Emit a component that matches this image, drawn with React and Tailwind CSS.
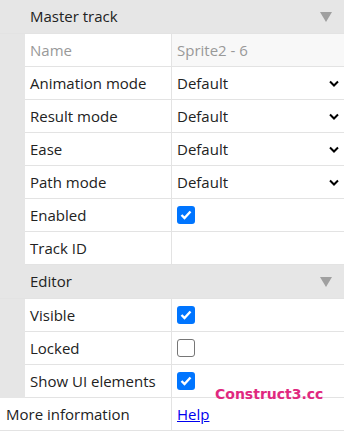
const font = { fontFamily: '"Segoe UI", "Open Sans", "Noto Sans", sans-serif' };

function Chevron() {
  return (
    <svg width="10" height="7" viewBox="0 0 10 7" className="mr-[5px]">
      <path d="M1 1.5 L5 5.5 L9 1.5" fill="none" stroke="#000" strokeWidth="2" />
    </svg>
  );
}

function Check({ on }) {
  if (!on) {
    return <div className="h-[18px] w-[18px] rounded-[3px] border border-[#767676] bg-white" />;
  }
  return (
    <div className="flex h-[18px] w-[18px] items-center justify-center rounded-[3px] bg-[#0075ff]">
      <svg width="12" height="10" viewBox="0 0 12 10">
        <path d="M1.5 5 L4.5 8 L10.5 1.5" fill="none" stroke="#fff" strokeWidth="2.4" />
      </svg>
    </div>
  );
}

function Header({ title }) {
  return (
    <div className="flex h-[33px] items-center justify-between bg-[#e6e6e6] pl-[30px] pr-[12px] text-[15px] text-[#222]">
      <span>{title}</span>
      <svg width="12" height="10" viewBox="0 0 12 10">
        <path d="M0 0 L12 0 L6 10 Z" fill="#a0a0a0" />
      </svg>
    </div>
  );
}

function Row({ label, children, muted, indent = true, valueBg = "bg-white" }) {
  return (
    <div className={`flex h-[33px] ${indent ? "ml-[25px]" : ""} border-b border-[#e3e3e3] bg-white text-[15px]`}>
      <div
        className={`flex ${indent ? "w-[147px] pl-[5px]" : "w-[172px] pl-[6px]"} items-center border-r border-[#e3e3e3] ${muted ? "text-[#999]" : "text-[#222]"}`}
      >
        {label}
      </div>
      <div className={`flex flex-1 items-center justify-between pl-[5px] ${valueBg}`}>{children}</div>
    </div>
  );
}

function Select() {
  return (
    <>
      <span className="text-[#222]">Default</span>
      <Chevron />
    </>
  );
}

export default function App() {
  return (
    <div className="relative h-[431px] w-[344px] overflow-hidden bg-[#e6e6e6]" style={font}>
      <Header title="Master track" />
      <div className="border-t border-[#e3e3e3]">
        <Row label="Name" muted valueBg="bg-[#f8f8f8]">
          <span className="text-[#999]">Sprite2 - 6</span>
        </Row>
      </div>
      <Row label="Animation mode"><Select /></Row>
      <Row label="Result mode"><Select /></Row>
      <Row label="Ease"><Select /></Row>
      <Row label="Path mode"><Select /></Row>
      <Row label="Enabled"><Check on /></Row>
      <Row label="Track ID" />
      <Header title="Editor" />
      <div className="border-t border-[#e3e3e3]">
        <Row label="Visible"><Check on /></Row>
      </div>
      <Row label="Locked"><Check /></Row>
      <Row label="Show UI elements"><Check on /></Row>
      <Row label="More information" indent={false}>
        <a href="#" className="text-[#0000ee] underline">Help</a>
      </Row>
      <div
        className="absolute left-[215px] top-[385px] text-[14px] font-bold leading-[18px] text-[#e0287f]"
        style={{ fontFamily: '"DejaVu Sans", sans-serif' }}
      >
        Construct3.cc
      </div>
    </div>
  );
}
